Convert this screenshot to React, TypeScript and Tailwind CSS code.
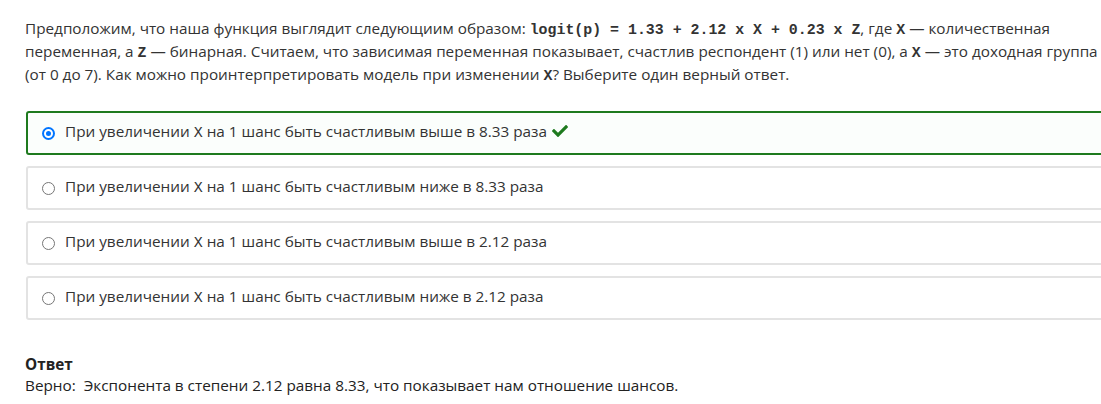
import React from "react";
import { FaCheck } from "react-icons/fa";

function Radio({ checked }: { checked?: boolean }) {
  if (checked) {
    return (
      <span className="flex h-[13px] w-[13px] shrink-0 items-center justify-center rounded-full bg-[#0075ff]">
        <span className="h-[9px] w-[9px] rounded-full border-2 border-white bg-[#0075ff]" />
      </span>
    );
  }
  return <span className="h-[13px] w-[13px] shrink-0 rounded-full border border-[#767676] bg-white" />;
}

function Code({ children }: { children: React.ReactNode }) {
  return (
    <code className="font-[family-name:'Liberation_Mono',monospace] text-[14.9px] leading-[1] font-bold whitespace-pre text-[#333]">
      {children}
    </code>
  );
}

function Option({ text, checked }: { text: [string, string]; checked?: boolean }) {
  return (
    <div
      className={
        checked
          ? "flex h-[44px] items-center gap-[10px] rounded-[3px] border-2 border-[#1e7a1e] bg-[#fbfefc] pl-[14px]"
          : "flex h-[44px] items-center gap-[10px] rounded-[3px] border-2 border-[#e3e3e3] bg-white pl-[14px]"
      }
    >
      <Radio checked={checked} />
      <span className="whitespace-pre text-[15.3px] text-[#333]">
        {text[0]}
        <span className="font-[family-name:'Liberation_Mono',monospace] text-[15px]">X</span>
        {text[1]}
        {checked && <FaCheck className="ml-[5px] inline-block align-[-2px] text-[16px] text-[#1e7a1e]" />}
      </span>
    </div>
  );
}

export default function App() {
  return (
    <div className="h-[404px] w-[1101px] overflow-hidden bg-white font-[family-name:'Open_Sans','Noto_Sans',sans-serif]">
      <div className="w-[1120px] pl-[25px] pt-[17px]">
        <p className="w-[1090px] whitespace-nowrap text-[15.3px] leading-[23px] text-[#333]">
          Предположим, что наша функция выглядит следующиим образом: <Code>logit(p) = 1.33 + 2.12 x X + 0.23 x Z</Code>,
          где <Code>X</Code> — количественная
          <br />
          переменная, а <Code>Z</Code> — бинарная. Считаем, что зависимая переменная показывает, счастлив респондент (1)
          или нет (0), а <Code>X</Code> — это доходная группа
          <br />
          (от 0 до 7). Как можно проинтерпретировать модель при изменении <Code>X</Code>? Выберите один верный ответ.
        </p>
        <div className="mt-[25px] flex flex-col gap-[11px] pl-[1px]">
          <Option checked text={["При увеличении ", " на 1 шанс быть счастливым выше в 8.33 раза"]} />
          <Option text={["При увеличении ", " на 1 шанс быть счастливым ниже в 8.33 раза"]} />
          <Option text={["При увеличении ", " на 1 шанс быть счастливым выше в 2.12 раза"]} />
          <Option text={["При увеличении ", " на 1 шанс быть счастливым ниже в 2.12 раза"]} />
        </div>
        <div className="mt-[34px] text-[15.3px] leading-[21px] text-[#222]">
          <div className="font-bold">Ответ</div>
          <div>Верно:&nbsp; Экспонента в степени 2.12 равна 8.33, что показывает нам отношение шансов.</div>
        </div>
      </div>
    </div>
  );
}
